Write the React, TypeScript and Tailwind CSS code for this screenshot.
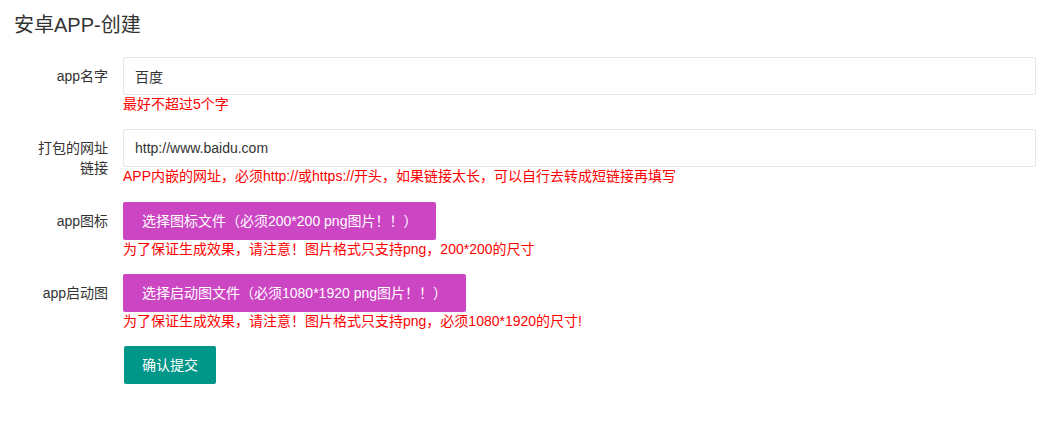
const font = {
  fontFamily: '"Liberation Sans", Arial, "Noto Sans CJK SC", sans-serif',
};

function Label({ children }: { children: React.ReactNode }) {
  return (
    <label className="w-[123px] shrink-0 py-[9px] pl-[30px] pr-[15px] text-right text-sm leading-5 text-[#333]">
      {children}
    </label>
  );
}

function Hint({ children }: { children: React.ReactNode }) {
  return <div className="text-sm leading-[19px] text-[#f00]">{children}</div>;
}

function TextRow({ label, value, hint }: { label: string; value: string; hint: string }) {
  return (
    <div className="mb-[15px] flex">
      <Label>{label}</Label>
      <div className="mr-[13px] flex-1">
        <input
          readOnly
          value={value}
          className="block h-[38px] w-full rounded-[2px] border border-[#e6e6e6] bg-white pl-[11px] text-sm text-[#333] outline-none"
          style={font}
        />
        <Hint>{hint}</Hint>
      </div>
    </div>
  );
}

function FileRow({ label, button, hint }: { label: string; button: string; hint: string }) {
  return (
    <div className="mb-[15px] flex">
      <Label>{label}</Label>
      <div className="flex-1">
        <button
          className="block h-[38px] rounded-[2px] bg-[#cc45c3] px-[19px] text-sm leading-[38px] text-white"
          style={font}
        >
          {button}
        </button>
        <Hint>{hint}</Hint>
      </div>
    </div>
  );
}

export default function App() {
  return (
    <div className="h-[435px] w-[1049px] bg-white" style={font}>
      <h2 className="px-[14px] pt-[11px] text-[20px] leading-[28px] text-[#333]">安卓APP-创建</h2>
      <form className="mt-[18px]">
        <TextRow label="app名字" value="百度" hint="最好不超过5个字" />
        <TextRow
          label="打包的网址链接"
          value="http://www.baidu.com"
          hint="APP内嵌的网址，必须http://或https://开头，如果链接太长，可以自行去转成短链接再填写"
        />
        <FileRow
          label="app图标"
          button="选择图标文件（必须200*200 png图片！！）"
          hint="为了保证生成效果，请注意！图片格式只支持png，200*200的尺寸"
        />
        <FileRow
          label="app启动图"
          button="选择启动图文件（必须1080*1920 png图片！！）"
          hint="为了保证生成效果，请注意！图片格式只支持png，必须1080*1920的尺寸!"
        />
        <div className="ml-[124px]">
          <button
            type="button"
            className="h-[38px] rounded-[2px] bg-[#009688] px-[18px] text-sm leading-[38px] text-white"
            style={font}
          >
            确认提交
          </button>
        </div>
      </form>
    </div>
  );
}
